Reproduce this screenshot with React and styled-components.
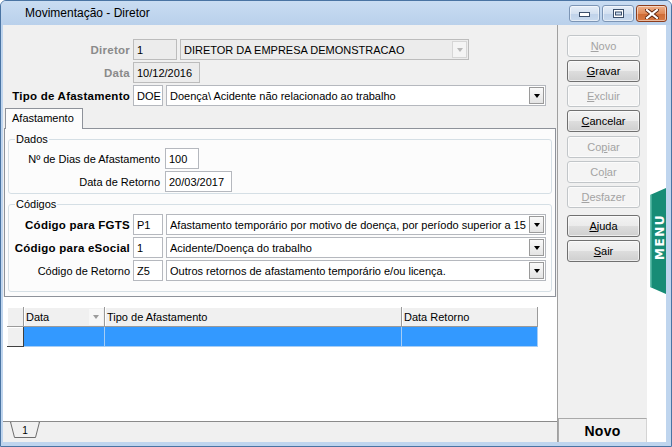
import React from 'react';
import styled, { createGlobalStyle } from 'styled-components';

const GlobalStyle = createGlobalStyle`
  html, body {
    margin: 0;
    padding: 0;
    background: #fff;
  }
  body {
    font-family: "Liberation Sans", Arial, sans-serif;
    font-size: 11px;
    color: #000;
  }
  * {
    box-sizing: border-box;
  }
`;

const Window = styled.div`
  width: 672px;
  height: 447px;
  display: flex;
  flex-direction: column;
  background: #bfd5ee;
  border: 1px solid #4a74a3;
  border-radius: 6px 6px 0 0;
  overflow: hidden;
`;

const TitleBar = styled.div`
  flex: 0 0 24px;
  display: flex;
  align-items: flex-start;
  padding: 0 4px 0 24px;
  background: linear-gradient(#c9dcf2, #b9d0eb);
`;

const Title = styled.div`
  font-size: 12px;
  line-height: 24px;
`;

const TitleButtons = styled.div`
  display: flex;
  gap: 2px;
  margin-left: auto;
  margin-top: 4px;
`;

const TitleButton = styled.div`
  width: ${(p) => p.w}px;
  height: 17px;
  display: flex;
  align-items: center;
  justify-content: center;
  border: 1px solid ${(p) => (p.close ? '#8d3e1d' : '#7c95b5')};
  border-radius: 3px;
  background: ${(p) =>
    p.close
      ? 'linear-gradient(#eeb08a 0%, #e08a58 50%, #cf6b35 51%, #d77a44 100%)'
      : 'linear-gradient(#e6eef8 0%, #d3e0f0 50%, #bfd2ea 51%, #c9daee 100%)'};
  box-shadow: inset 0 0 0 1px rgba(255, 255, 255, 0.5);
`;

const Body = styled.div`
  flex: 1;
  display: flex;
  margin: 0 5px 4px 2px;
  min-height: 0;
`;

const Main = styled.div`
  width: 555px;
  display: flex;
  flex-direction: column;
  background: #f0f0f0;
  border-right: 1px solid #a0a0a0;
`;

const FormArea = styled.div`
  flex: 0 0 272px;
  display: flex;
  flex-direction: column;
  padding-top: 14px;
`;

const Row = styled.div`
  display: flex;
  align-items: center;
  gap: ${(p) => p.gap ?? 3}px;
  height: 21px;
  margin-bottom: ${(p) => p.mb ?? 2}px;
`;

const Label = styled.div`
  width: ${(p) => p.w}px;
  flex: none;
  text-align: right;
  white-space: nowrap;
  font-weight: ${(p) => (p.bold ? 'bold' : 'normal')};
  font-size: ${(p) => (p.bold ? '11.5px' : '11px')};
  letter-spacing: ${(p) => (p.bold ? '0.25px' : '0')};
  color: ${(p) => (p.muted ? '#8a8a8a' : '#000')};
`;

const Field = styled.div`
  width: ${(p) => p.w}px;
  height: 21px;
  flex: none;
  display: flex;
  align-items: center;
  padding-left: 3px;
  border: 1px solid ${(p) => (p.disabled ? '#bcbcbc' : '#b5b8be')};
  background: ${(p) => (p.disabled ? '#ececec' : '#fff')};
  white-space: nowrap;
  overflow: hidden;
`;

const Combo = styled(Field)`
  padding-right: 1px;
`;

const ComboText = styled.span`
  flex: 1;
  overflow: hidden;
  white-space: nowrap;
`;

const DropButton = styled.div`
  width: 15px;
  height: 17px;
  flex: none;
  display: flex;
  align-items: center;
  justify-content: center;
  border: 1px solid ${(p) => (p.disabled ? '#d6d6d6' : '#9a9a9a')};
  background: ${(p) => (p.disabled ? '#f4f4f4' : 'linear-gradient(#fafafa, #e4e4e4)')};

  &::after {
    content: '';
    border-left: 3.5px solid transparent;
    border-right: 3.5px solid transparent;
    border-top: 4px solid ${(p) => (p.disabled ? '#b8b8b8' : '#000')};
    margin-top: 1px;
  }
`;

const TabStrip = styled.div`
  display: flex;
  padding-left: 2px;
  margin-top: 2px;
`;

const Tab = styled.div`
  width: 78px;
  height: 21px;
  padding-left: 6px;
  line-height: 19px;
  border: 1px solid #8e929a;
  border-bottom: none;
  background: #fcfcfc;
  position: relative;
  z-index: 1;
`;

const TabPanel = styled.div`
  flex: 1;
  width: 552px;
  margin: -1px 0 0 1px;
  border: 1px solid #8e929a;
  background: #fcfcfc;
  display: flex;
  flex-direction: column;
`;

const Group = styled.fieldset`
  width: 544px;
  margin: ${(p) => p.mt}px 0 0 3px;
  padding: ${(p) => p.pt}px 0 ${(p) => p.pb}px 0;
  border: 1px solid #d5dfe5;
  border-radius: 3px;
  min-width: 0;
`;

const Legend = styled.legend`
  margin-left: 6px;
  padding: 0 1px;
  line-height: 13px;
`;

const GridArea = styled.div`
  flex: 1;
  background: #fff;
  padding: 10px 0 0 4px;
`;

const Grid = styled.div`
  display: grid;
  grid-template-columns: 17px 81px 297px 136px;
  grid-auto-rows: 20px;
`;

const HeadCell = styled.div`
  display: flex;
  align-items: center;
  padding-left: 2px;
  background: #f0f0f0;
  border-right: 1px solid #9a9a9a;
  border-bottom: 1px solid #9a9a9a;
  box-shadow: inset 1px 1px 0 #fff;
  white-space: nowrap;
`;

const SortArrow = styled.span`
  margin-left: auto;
  margin-right: 1px;
  width: 14px;
  height: 16px;
  display: flex;
  align-items: center;
  justify-content: center;
  background: #f7f7f7;

  &::after {
    content: '';
    border-left: 3.5px solid transparent;
    border-right: 3.5px solid transparent;
    border-top: 4px solid #9c9c9c;
  }
`;

const Indicator = styled.div`
  background: #f0f0f0;
  border-right: 1px solid #404040;
  border-bottom: 1px solid #404040;
  box-shadow: inset 1px 1px 0 #fff;
`;

const DataCell = styled.div`
  background: #3399ff;
  border-right: 1px solid #a6cdf5;
  border-bottom: 1px solid #a6cdf5;
`;

const BottomStrip = styled.div`
  flex: 0 0 21px;
  display: flex;
  align-items: flex-start;
  padding-left: 7px;
  border-top: 1px solid #8a8a8a;
  background: #f0f0f0;
`;

const ButtonPanel = styled.div`
  width: 89px;
  display: flex;
  flex-direction: column;
  background: #f0f0f0;
`;

const ButtonStack = styled.div`
  display: flex;
  flex-direction: column;
  gap: 3px;
  padding: 10px 0 0 9px;
`;

const Button = styled.div`
  width: 73px;
  height: 22px;
  margin-top: ${(p) => p.mt ?? 0}px;
  display: flex;
  align-items: center;
  justify-content: center;
  border-radius: 3px;
  border: 1px solid ${(p) => (p.off ? '#c2c6c9' : '#707070')};
  background: ${(p) =>
    p.off
      ? '#f4f4f4'
      : 'linear-gradient(#f3f3f3 0%, #ebebeb 50%, #dddddd 51%, #cfcfcf 100%)'};
  color: ${(p) => (p.off ? '#a3a3a3' : '#000')};
  box-shadow: inset 0 0 0 1px rgba(255, 255, 255, 0.6);
`;

const StatusBox = styled.div`
  margin-top: auto;
  height: 24px;
  display: flex;
  align-items: center;
  justify-content: center;
  border-top: 1px solid #a9a9a9;
  border-left: 1px solid #a9a9a9;
  border-right: 1px solid #d4d4d4;
  font-size: 14px;
  font-weight: bold;
  letter-spacing: 0.3px;
`;

const MenuStrip = styled.div`
  width: 19px;
  background: #fff;
  display: flex;
  flex-direction: column;
`;

const MenuTab = styled.svg`
  margin-top: 163px;
  display: block;
`;

const Mn = ({ text, at }) => (
  <>
    {text.slice(0, at)}
    <u>{text[at]}</u>
    {text.slice(at + 1)}
  </>
);

const buttons = [
  { text: 'Novo', at: 0, off: true },
  { text: 'Gravar', at: 0 },
  { text: 'Excluir', at: 0, off: true },
  { text: 'Cancelar', at: 0 },
  { text: 'Copiar', at: 2, off: true, mt: 1 },
  { text: 'Colar', at: 2, off: true },
  { text: 'Desfazer', at: 0, off: true },
  { text: 'Ajuda', at: 0, mt: 4 },
  { text: 'Sair', at: 0 },
];

const App = () => {
  return (
    <>
      <GlobalStyle />
      <Window>
        <TitleBar>
          <Title>Movimentação - Diretor</Title>
          <TitleButtons>
            <TitleButton w={31}>
              <svg width="11" height="6" viewBox="0 0 11 6">
                <rect x="0.5" y="1.5" width="10" height="4" fill="#fff" stroke="#3b4f6b" />
              </svg>
            </TitleButton>
            <TitleButton w={32}>
              <svg width="11" height="9" viewBox="0 0 11 9">
                <rect x="0.5" y="0.5" width="10" height="8" fill="#fff" stroke="#3b4f6b" />
                <rect x="2.5" y="3" width="6" height="3" fill="#c9daee" stroke="#3b4f6b" />
              </svg>
            </TitleButton>
            <TitleButton w={31} close>
              <svg width="14" height="10" viewBox="0 0 14 10">
                <path d="M2 1 L12 9 M12 1 L2 9" stroke="#5a2410" strokeWidth="4" strokeLinecap="square" />
                <path d="M2 1 L12 9 M12 1 L2 9" stroke="#fff" strokeWidth="2.2" strokeLinecap="square" />
              </svg>
            </TitleButton>
          </TitleButtons>
        </TitleBar>

        <Body>
          <Main>
            <FormArea>
              <Row>
                <Label w={127} bold muted>Diretor</Label>
                <Field w={44} disabled>1</Field>
                <Combo w={289} disabled>
                  <ComboText>DIRETOR DA EMPRESA DEMONSTRACAO</ComboText>
                  <DropButton disabled />
                </Combo>
              </Row>
              <Row>
                <Label w={127} bold muted>Data</Label>
                <Field w={67} disabled>10/12/2016</Field>
              </Row>
              <Row mb={0}>
                <Label w={127} bold>Tipo de Afastamento</Label>
                <Field w={30}>DOE</Field>
                <Combo w={380}>
                  <ComboText>Doença\ Acidente não relacionado ao trabalho</ComboText>
                  <DropButton />
                </Combo>
              </Row>

              <TabStrip>
                <Tab>Afastamento</Tab>
              </TabStrip>
              <TabPanel>
                <Group mt={4} pt={2} pb={1}>
                  <Legend>Dados</Legend>
                  <Row gap={5}>
                    <Label w={151}>Nº de Dias de Afastamento</Label>
                    <Field w={34}>100</Field>
                  </Row>
                  <Row gap={5} mb={0}>
                    <Label w={151}>Data de Retorno</Label>
                    <Field w={67}>20/03/2017</Field>
                  </Row>
                </Group>
                <Group mt={4} pt={3} pb={10}>
                  <Legend>Códigos</Legend>
                  <Row>
                    <Label w={121} bold>Código para FGTS</Label>
                    <Field w={30}>P1</Field>
                    <Combo w={380}>
                      <ComboText>
                        Afastamento temporário por motivo de doença, por período superior a 15 d
                      </ComboText>
                      <DropButton />
                    </Combo>
                  </Row>
                  <Row>
                    <Label w={121} bold>Código para eSocial</Label>
                    <Field w={30}>1</Field>
                    <Combo w={380}>
                      <ComboText>Acidente/Doença do trabalho</ComboText>
                      <DropButton />
                    </Combo>
                  </Row>
                  <Row mb={0}>
                    <Label w={121}>Código de Retorno</Label>
                    <Field w={30}>Z5</Field>
                    <Combo w={380}>
                      <ComboText>Outros retornos de afastamento temporário e/ou licença.</ComboText>
                      <DropButton />
                    </Combo>
                  </Row>
                </Group>
              </TabPanel>
            </FormArea>

            <GridArea>
              <Grid>
                <HeadCell />
                <HeadCell>
                  Data
                  <SortArrow />
                </HeadCell>
                <HeadCell>Tipo de Afastamento</HeadCell>
                <HeadCell>Data Retorno</HeadCell>
                <Indicator />
                <DataCell />
                <DataCell />
                <DataCell />
              </Grid>
            </GridArea>

            <BottomStrip>
              <svg width="30" height="17" viewBox="0 0 30 17">
                <polygon points="0.5,0 29.5,0 25.5,15.5 4.5,15.5" fill="#f0f0f0" stroke="#6d6d6d" />
                <line x1="1.5" y1="0" x2="28.5" y2="0" stroke="#f0f0f0" strokeWidth="2" />
                <text x="15" y="12" textAnchor="middle" fontSize="10" fontFamily="Liberation Sans, Arial, sans-serif" fill="#000">
                  1
                </text>
              </svg>
            </BottomStrip>
          </Main>

          <ButtonPanel>
            <ButtonStack>
              {buttons.map((b) => (
                <Button key={b.text} off={b.off} mt={b.mt}>
                  <Mn text={b.text} at={b.at} />
                </Button>
              ))}
            </ButtonStack>
            <StatusBox>Novo</StatusBox>
          </ButtonPanel>

          <MenuStrip>
            <MenuTab width="19" height="106" viewBox="0 0 19 106">
              <polygon points="3,7 19,0 19,106 3,99" fill="#178c76" />
              <line x1="3.8" y1="7" x2="3.8" y2="99" stroke="#63c0ad" strokeWidth="1.6" />
              <text
                transform="translate(17,49) rotate(-90)"
                textAnchor="middle"
                fontSize="12"
                fontWeight="bold"
                letterSpacing="1.5"
                fontFamily="DejaVu Sans, Verdana, sans-serif"
                fill="#fff"
              >
                MENU
              </text>
            </MenuTab>
          </MenuStrip>
        </Body>
      </Window>
    </>
  );
};

export default App;
